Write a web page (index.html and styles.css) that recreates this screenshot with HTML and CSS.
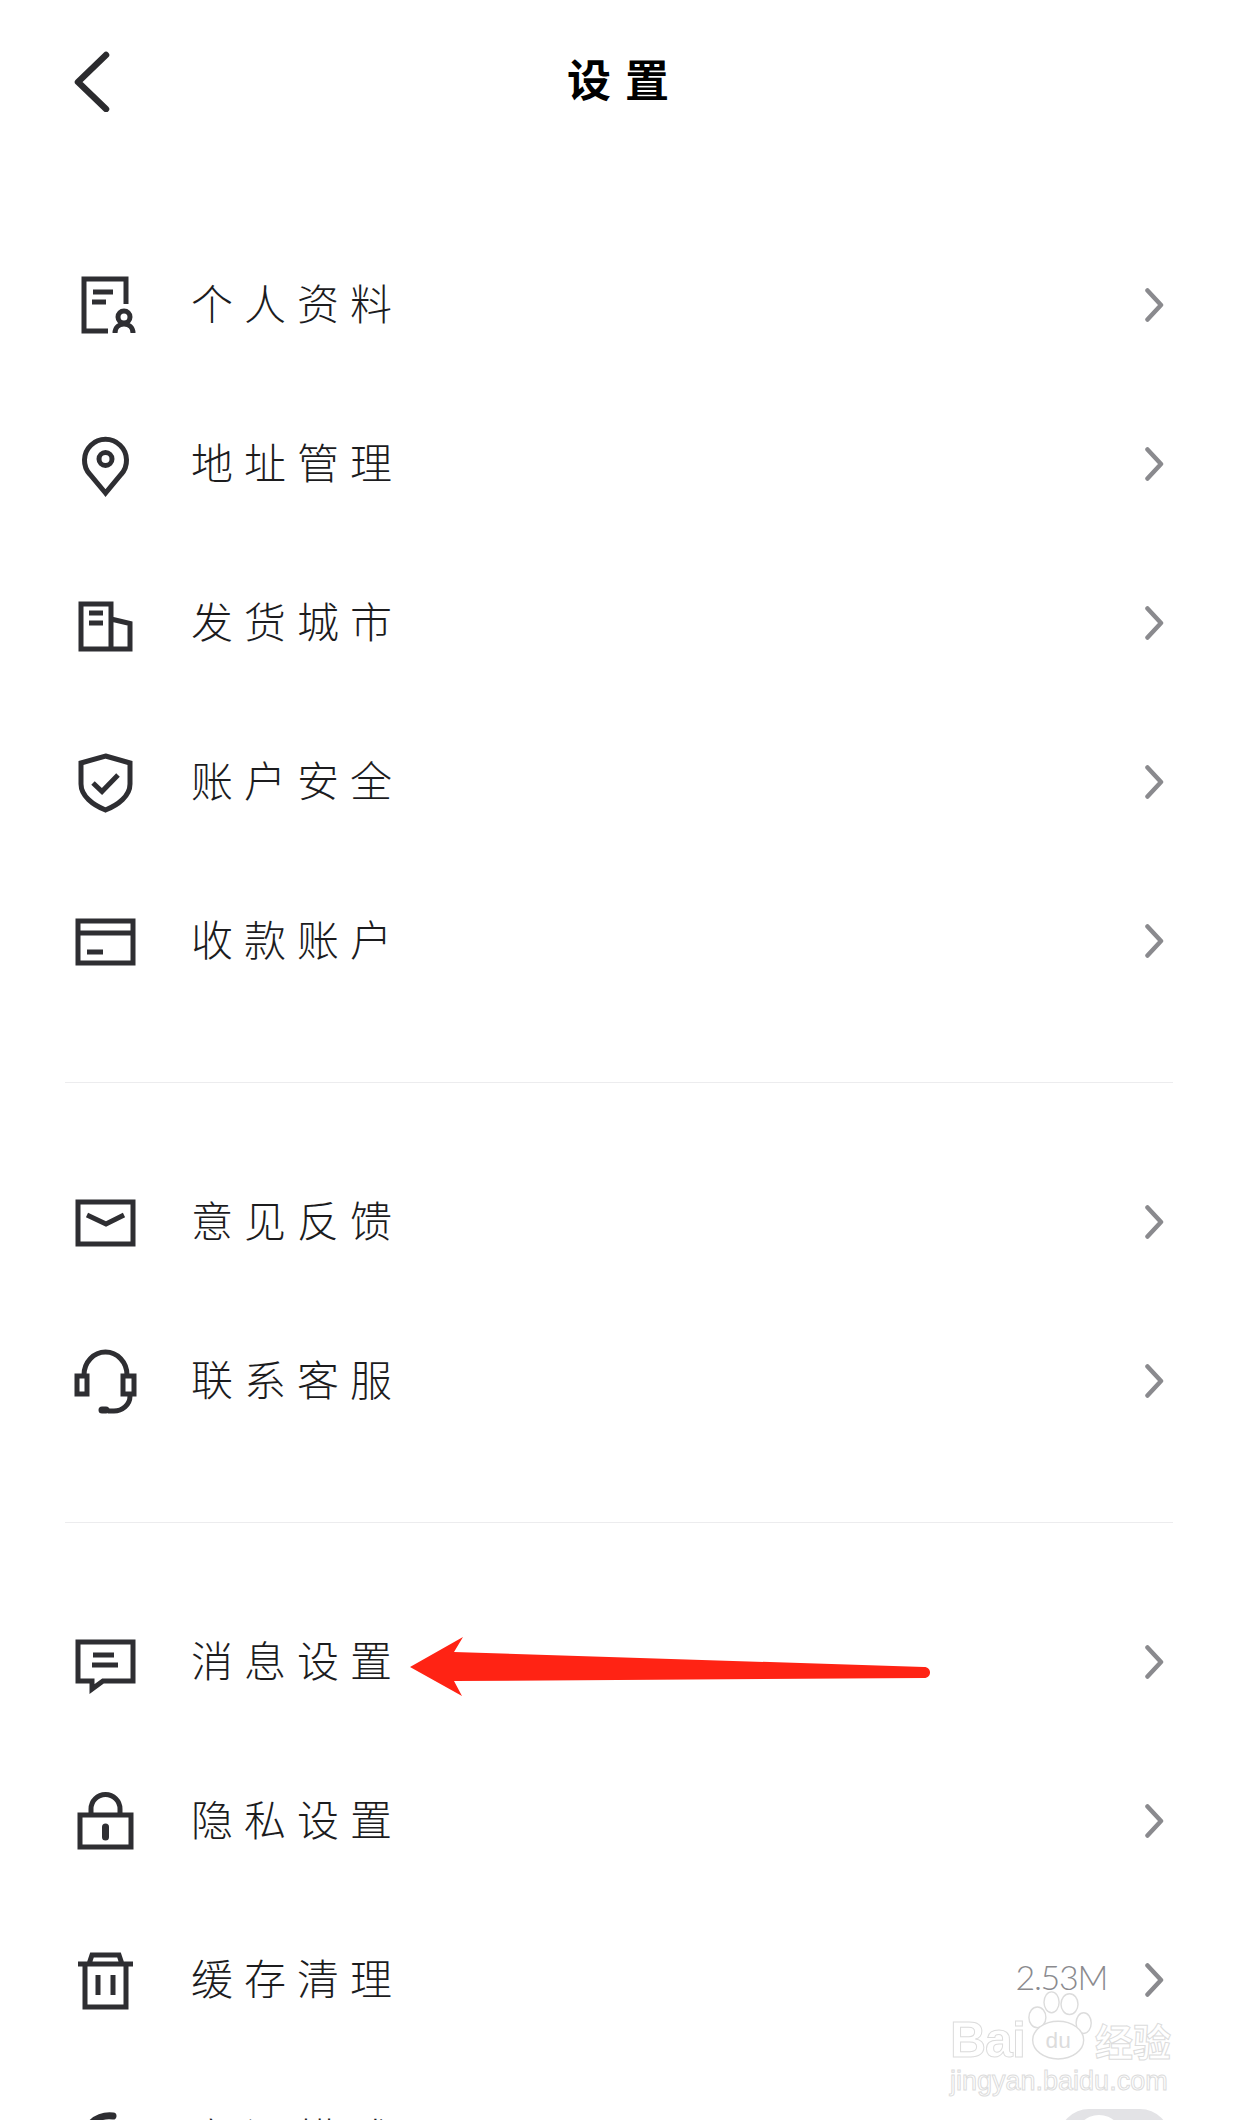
FILE: index.html
```html
<!DOCTYPE html>
<html lang="zh-CN">
<head>
    <meta charset="UTF-8">
    <meta name="viewport" content="width=device-width, initial-scale=1.0">
    <title>设置</title>
    <link rel="stylesheet" href="styles.css">
</head>
<body>
    <div class="page">
        <header class="top-bar">
            <svg class="back" viewBox="0 0 44 64"><path d="M36 7 8 34l28 27"/></svg>
            <h1>设置</h1>
        </header>

        <!-- first group -->
        <section class="group">
            <div class="row">
                <svg class="icon" viewBox="0 0 60 60"><path d="M32 56H8V4h42v25M17 17h20M16 27h14"/><circle cx="48" cy="42" r="6"/><path d="M39 58c0-12 18-12 18 0"/></svg>
                <span class="label">个人资料</span>
                <svg class="more" viewBox="0 0 20 34"><path d="M2.500 2.500 16 17 2.500 31.500"/></svg>
            </div>
            <div class="row">
                <svg class="icon" viewBox="0 0 60 60"><path d="M29.500 59 14 40.500a21 21 0 1 1 31 0z"/><circle cx="29.500" cy="25" r="6.500"/></svg>
                <span class="label">地址管理</span>
                <svg class="more" viewBox="0 0 20 34"><path d="M2.500 2.500 16 17 2.500 31.500"/></svg>
            </div>
            <div class="row">
                <svg class="icon" viewBox="0 0 60 60"><path d="M35 26l19 4.500V56H5V11h30v45M13 20h14M13 30h14"/></svg>
                <span class="label">发货城市</span>
                <svg class="more" viewBox="0 0 20 34"><path d="M2.500 2.500 16 17 2.500 31.500"/></svg>
            </div>
            <div class="row">
                <svg class="icon" viewBox="0 0 60 60"><path d="M29.500 4 54 11v21c0 12-12 21-24.500 26C17 53 5 44 5 32V11z"/><path d="M17 31l9 8.500L42 23"/></svg>
                <span class="label">账户安全</span>
                <svg class="more" viewBox="0 0 20 34"><path d="M2.500 2.500 16 17 2.500 31.500"/></svg>
            </div>
            <div class="row">
                <svg class="icon" viewBox="0 0 60 60"><path d="M2 10h55v42H2zM2 22h55M11 41h16"/></svg>
                <span class="label">收款账户</span>
                <svg class="more" viewBox="0 0 20 34"><path d="M2.500 2.500 16 17 2.500 31.500"/></svg>
            </div>
        </section>

        <div class="divider"></div>

        <section class="group">
            <div class="row">
                <svg class="icon" viewBox="0 0 60 60"><path d="M2 10h55v42H2zM11 23l19 9 18-9"/></svg>
                <span class="label">意见反馈</span>
                <svg class="more" viewBox="0 0 20 34"><path d="M2.500 2.500 16 17 2.500 31.500"/></svg>
            </div>
            <div class="row">
                <svg class="icon" viewBox="0 0 60 60"><path d="M8 24a21.500 23 0 0 1 43 0M1 25h10v18H1zM47 25h11v18H47zM54 45c0 9-8 15-16 15h-6"/><path class="fat" d="M26 59h4"/></svg>
                <span class="label">联系客服</span>
                <svg class="more" viewBox="0 0 20 34"><path d="M2.500 2.500 16 17 2.500 31.500"/></svg>
            </div>
        </section>

        <div class="divider"></div>

        <section class="group">
            <div class="row">
                <svg class="icon" viewBox="0 0 60 60"><path d="M2 10h55v39H27l-11 8v-8H2zM17 23h21M16 33h26"/></svg>
                <span class="label">消息设置</span>
                <svg class="more" viewBox="0 0 20 34"><path d="M2.500 2.500 16 17 2.500 31.500"/></svg>
            </div>
            <div class="row">
                <svg class="icon" viewBox="0 0 60 60"><path d="M4 24h51v32H4zM15 24v-6a14.500 14.500 0 0 1 29 0v6"/><path class="fat" d="M29.500 36v10"/></svg>
                <span class="label">隐私设置</span>
                <svg class="more" viewBox="0 0 20 34"><path d="M2.500 2.500 16 17 2.500 31.500"/></svg>
            </div>
            <div class="row">
                <svg class="icon" viewBox="0 0 60 60"><path d="M2 14h55M9 14v43h41V14M13 14l3-9h27l3 9M22 25v20M37 25v20"/></svg>
                <span class="label">缓存清理</span>
                <span class="value">2.53M</span>
                <svg class="more" viewBox="0 0 20 34"><path d="M2.500 2.500 16 17 2.500 31.500"/></svg>
            </div>
            <div class="row">
                <svg class="icon" viewBox="0 0 60 60"><path class="fat" d="M14 16C19 9 28 6 37 7"/></svg>
                <span class="label">夜间模式</span>
                <div class="switch"><div class="knob"></div></div>
            </div>
        </section>

        <!-- red arrow drawn over the screenshot -->
        <svg class="arrow" viewBox="0 0 530 70"><path d="M5 37 58 7l-9 15 470 15c8 0 8 11 0 11L49 51l8 15z"/></svg>

        <div class="watermark">
            <div class="wm-line">
                <span class="wm-latin">Bai</span>
                <svg class="paw" viewBox="0 0 72 76">
                    <ellipse cx="11" cy="31" rx="9" ry="11"/>
                    <ellipse cx="26" cy="15" rx="8" ry="11"/>
                    <ellipse cx="45" cy="17" rx="9" ry="11"/>
                    <ellipse cx="60" cy="37" rx="8" ry="11"/>
                    <ellipse cx="33" cy="55" rx="27" ry="20"/>
                    <text x="33" y="63" text-anchor="middle">du</text>
                </svg>
                <span class="wm-cjk">经验</span>
            </div>
            <div class="wm-url">jingyan.baidu.com</div>
        </div>
    </div>
</body>
</html>
```

FILE: styles.css
```css
html, body {
    margin: 0;
    padding: 0;
    height: 2120px;
    overflow: hidden;
    background: #fff;
}
.page {
    position: relative;
    width: 1240px;
    height: 2120px;
    overflow: hidden;
    font-family: "Noto Sans CJK SC", "Noto Sans", sans-serif;
    color: #1c1c1e;
}
.top-bar {
    display: grid;
    grid-template-columns: 1fr auto 1fr;
    align-items: center;
    height: 160px;
    padding: 0 60px 0 70px;
    margin-bottom: 65px;
}
.back {
    width: 44px;
    height: 64px;
}
.back path {
    fill: none;
    stroke: #2b2b2e;
    stroke-width: 6.500;
    stroke-linecap: round;
    stroke-linejoin: round;
}
.top-bar h1 {
    margin: 0 0 5px;
    font-size: 44px;
    font-weight: 700;
    letter-spacing: 14px;
    line-height: 1;
    color: #000;
}
.row {
    display: flex;
    align-items: center;
    height: 159px;
    padding: 0 75px 0 76px;
}
.icon {
    flex: none;
    width: 60px;
    height: 60px;
    margin-right: 55px;
    overflow: visible;
}
.icon path, .icon circle {
    fill: none;
    stroke: #2e2e32;
    stroke-width: 5;
}
.icon .fat {
    stroke-width: 7;
    stroke-linecap: round;
}
.label {
    flex: 1;
    margin-bottom: 6px;
    font-size: 42px;
    font-weight: 300;
    letter-spacing: 11px;
    line-height: 1;
}
.value {
    margin: 0 38px 6px 0;
    font-family: Lato, sans-serif;
    font-size: 34px;
    font-weight: 300;
    letter-spacing: -1.300px;
    color: #8a8a8e;
}
.more {
    flex: none;
    width: 20px;
    height: 34px;
}
.more path {
    fill: none;
    stroke: #8a8a8e;
    stroke-width: 4.500;
    stroke-linecap: round;
    stroke-linejoin: round;
}
.divider {
    height: 1px;
    margin: 62px 67px 59px 65px;
    background: #ececee;
}
.switch {
    box-sizing: border-box;
    width: 111px;
    height: 60px;
    margin-right: -5px;
    padding: 6px 0 0 16px;
    border-radius: 30px;
    background: #e3e3e6;
}
.knob {
    width: 48px;
    height: 48px;
    border-radius: 50%;
    background: #fff;
}
.arrow {
    position: absolute;
    left: 405px;
    top: 1630px;
    width: 530px;
    height: 70px;
}
.arrow path {
    fill: #ff2314;
}
.watermark {
    position: absolute;
    left: 950px;
    top: 1988px;
    width: 230px;
}
.wm-line {
    display: flex;
    align-items: flex-end;
    height: 76px;
}
.wm-latin, .wm-url {
    font-family: "Liberation Sans", sans-serif;
    color: #fff;
    -webkit-text-stroke: 1px #dcdcdc;
}
.wm-latin {
    flex: none;
    width: 77px;
    font-size: 50px;
    font-weight: 700;
    line-height: 1;
    letter-spacing: -1px;
    margin-bottom: -1px;
}
.paw {
    flex: none;
    width: 68px;
    height: 72px;
    margin-bottom: 4px;
}
.paw ellipse {
    fill: #fff;
    stroke: #dcdcdc;
    stroke-width: 1.500;
}
.paw text {
    font-family: "Liberation Sans", sans-serif;
    font-size: 24px;
    fill: #dcdcdc;
}
.wm-cjk {
    flex: none;
    font-size: 38px;
    font-weight: 700;
    line-height: 1;
    margin-bottom: 5px;
    color: #fff;
    -webkit-text-stroke: 1px #dcdcdc;
}
.wm-url {
    font-size: 27px;
    line-height: 34px;
}
```
